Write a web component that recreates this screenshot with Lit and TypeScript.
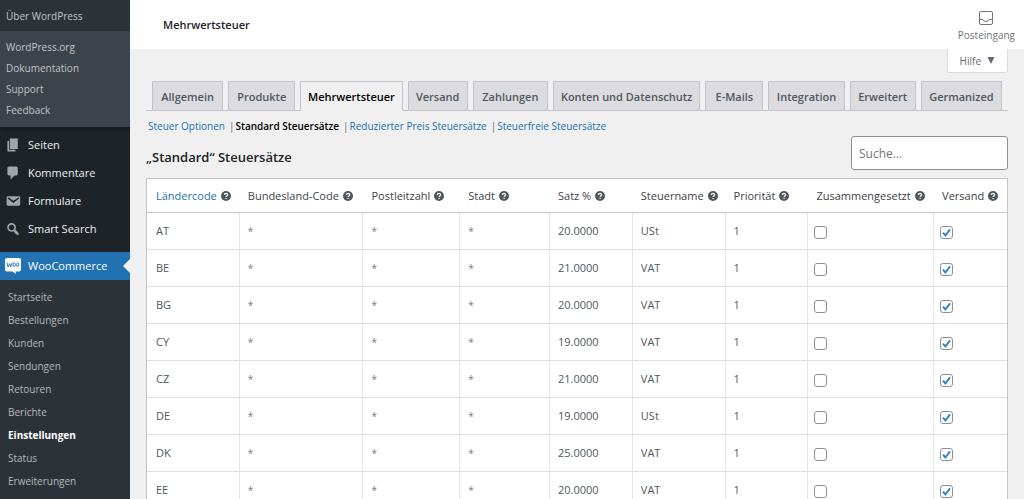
import { LitElement, html, css, svg } from "lit";
import { customElement } from "lit/decorators.js";
import { classMap } from "lit/directives/class-map.js";

const aboutLinks = ["WordPress.org", "Dokumentation", "Support", "Feedback"];

const menu = [
  { label: "Seiten", icon: svg`<path d="M6 15V2h10v13H6zm-1 1h8v2H3V5h2v11z"/>` },
  { label: "Kommentare", icon: svg`<path d="M5 2h9q.82 0 1.41.59T16 4v7q0 .82-.59 1.41T14 13h-2l-5 5v-5H5q-.82 0-1.41-.59T3 11V4q0-.82.59-1.41T5 2z"/>` },
  { label: "Formulare", icon: svg`<path d="M3.87 4h13.25C18.37 4 19 4.59 19 5.79v8.42c0 1.19-.63 1.79-1.88 1.79H3.87c-1.25 0-1.88-.6-1.88-1.79V5.79c0-1.2.63-1.79 1.88-1.79zm6.62 8.6l6.74-5.53c.24-.2.43-.66.13-1.07-.29-.41-.82-.42-1.17-.17l-5.7 3.86L4.8 5.83c-.35-.25-.88-.24-1.17.17-.3.41-.11.87.13 1.07z"/>` },
  { label: "Smart Search", icon: svg`<path d="M12.14 4.18c1.87 1.87 2.11 4.75.72 6.89.12.1.22.21.36.31.2.16.47.36.81.59.34.24.56.39.66.47.42.31.73.57.94.78.32.32.6.65.84 1 .25.35.44.69.59 1.04.14.35.21.68.18 1-.02.32-.14.59-.36.81s-.49.34-.81.36c-.31.02-.65-.04-.99-.19-.35-.14-.7-.34-1.04-.59-.35-.24-.68-.52-1-.84-.21-.21-.47-.52-.77-.93-.1-.13-.25-.35-.47-.66-.22-.32-.4-.57-.56-.78-.16-.2-.29-.35-.44-.5-2.07 1.09-4.69.76-6.44-.98-2.14-2.15-2.14-5.64 0-7.78 2.15-2.15 5.63-2.15 7.78 0zm-1.41 6.36c1.36-1.37 1.36-3.58 0-4.95-1.37-1.37-3.59-1.37-4.95 0-1.37 1.37-1.37 3.58 0 4.95 1.36 1.37 3.58 1.37 4.95 0z"/>` },
];

const shopLinks = ["Startseite", "Bestellungen", "Kunden", "Sendungen", "Retouren", "Berichte", "Einstellungen", "Status", "Erweiterungen"];

const tabs = ["Allgemein", "Produkte", "Mehrwertsteuer", "Versand", "Zahlungen", "Konten und Datenschutz", "E-Mails", "Integration", "Erweitert", "Germanized"];

const sections = ["Steuer Optionen", "Standard Steuersätze", "Reduzierter Preis Steuersätze", "Steuerfreie Steuersätze"];

const columns = ["Ländercode", "Bundesland-Code", "Postleitzahl", "Stadt", "Satz %", "Steuername", "Priorität", "Zusammengesetzt", "Versand"];
// Relative column widths, in the order of the headings.
const columnShares = [92, 124, 97, 90, 83, 93, 83, 126, 74];
const shareTotal = columnShares.reduce((a, b) => a + b, 0);

const rates = [
  ["AT", "20.0000", "USt"],
  ["BE", "21.0000", "VAT"],
  ["BG", "20.0000", "VAT"],
  ["CY", "19.0000", "VAT"],
  ["CZ", "21.0000", "VAT"],
  ["DE", "19.0000", "USt"],
  ["DK", "25.0000", "VAT"],
  ["EE", "20.0000", "VAT"],
];

@customElement("admin-menu")
class AdminMenu extends LitElement {
  static styles = css`
    :host { display: block; flex: 0 0 130px; background: #1d2327; color: #f0f0f1; font-size: 10px; overflow: hidden; }
    a { color: inherit; text-decoration: none; display: block; }
    ul { list-style: none; margin: 0; padding: 0; }
    .about { background: #2c3338; color: #c3c4c7; line-height: 30px; padding: 1px 0 0 6px; }
    .about-list { background: #3c434a; color: #c3c4c7; padding: 6px 6px 6px; margin-bottom: 4px; box-shadow: 0 2px 4px rgba(0, 0, 0, 0.3); }
    .about-list a { line-height: 21px; }
    .item { display: flex; align-items: center; gap: 7px; height: 28px; padding-left: 5px; font-size: 11px; }
    .item svg { width: 16px; height: 16px; fill: #a0a5aa; flex: none; }
    .current { background: #2271b1; color: #fff; margin-top: 9px; position: relative; }
    .current svg { fill: #fff; }
    .current::after { content: ""; position: absolute; right: 0; top: 7px; border: 7px solid transparent; border-right-color: #f0f0f0; border-left-width: 0; }
    .sub { background: #2c3338; color: #b4b9be; padding: 6px 0 200px 8px; }
    .sub a { line-height: 23px; }
    .sub .on { color: #fff; font-weight: 700; }
  `;

  render() {
    return html`
      <nav aria-label="Hauptmenü">
        <a class="about" href="#">Über WordPress</a>
        <ul class="about-list">
          ${aboutLinks.map((t) => html`<li><a href="#">${t}</a></li>`)}
        </ul>
        ${menu.map((m) => html`<a class="item" href="#"><svg viewBox="0 0 20 20" aria-hidden="true">${m.icon}</svg>${m.label}</a>`)}
        <a class="item current" href="#">
          <svg viewBox="0 0 16 16" aria-hidden="true">
            <path d="M2 0h12q2 0 2 2v9.500q0 2-2 2h-3.500l.5 2.500-3.500-2.500H2q-2 0-2-2V2Q0 0 2 0z" />
            <path d="M2 4.500l1 4.500 1.700-3.500 1 3.500 1.500-4.500" fill="none" stroke="#2271b1" stroke-width="0.900" />
            <ellipse cx="9.200" cy="6.700" rx="1.100" ry="1.900" fill="none" stroke="#2271b1" stroke-width="0.900" />
            <ellipse cx="12.700" cy="6.700" rx="1.100" ry="1.900" fill="none" stroke="#2271b1" stroke-width="0.900" />
          </svg>WooCommerce</a>
        <ul class="sub">
          ${shopLinks.map((t) => html`<li><a class=${classMap({ on: t === "Einstellungen" })} href="#">${t}</a></li>`)}
        </ul>
      </nav>
    `;
  }
}

@customElement("tax-table")
class TaxTable extends LitElement {
  static styles = css`
    :host { display: block; }
    table { width: 100%; table-layout: fixed; border-collapse: separate; border-spacing: 0; background: #fff; border: 1px solid #c3c4c7; box-sizing: border-box; }
    th { height: 33px; padding: 0 0 0 9px; text-align: left; font-weight: 400; white-space: nowrap; color: #3c434a; border-bottom: 1px solid #c3c4c7; }
    th:first-child { color: #2271b1; }
    .head { display: flex; align-items: center; gap: 4px; }
    .head svg { width: 10px; height: 10px; flex: none; margin-top: 1px; }
    td { height: 36px; padding: 0; border-bottom: 1px solid #dfdfdf; border-left: 1px solid #e5e5e5; }
    td:first-child { border-left: 0; }
    .text { display: block; box-sizing: border-box; width: 100%; height: 36px; margin: 0; padding: 0 8px 1px; border: 0; background: none; font: inherit; color: #50575e; outline-offset: -2px; }
    td:first-child .text { padding-left: 9px; }
    .any { font-size: 10px; color: #787c82; }
    .check { appearance: none; display: block; box-sizing: border-box; width: 13px; height: 13px; margin: 3px 0 0 6px; border: 1px solid #8c8f94; border-radius: 3px; background: #fff; }
    .check:checked { background: #fff url('data:image/svg+xml;utf8,<svg xmlns="http://www.w3.org/2000/svg" viewBox="0 0 11 11"><path d="M2 5.6l2.4 2.9L9 2.4" fill="none" stroke="%233582c4" stroke-width="2"/></svg>') center / 11px 11px no-repeat; }
  `;

  private textCell(column: number, value: string) {
    return html`<td><input class=${classMap({ text: true, any: value === "*" })} type="text" aria-label=${columns[column]} .value=${value} /></td>`;
  }

  render() {
    return html`
      <table>
        <colgroup>
          ${columnShares.map((w) => html`<col style="width:${(w / shareTotal) * 100}%" />`)}
        </colgroup>
        <thead>
          <tr>
            ${columns.map((c) => html`<th scope="col"><span class="head">${c}
              <svg viewBox="0 0 10 10" aria-hidden="true">
                <circle cx="5" cy="5" r="5" fill="#50575e" />
                <path d="M3.4 3.9Q3.5 2.4 5 2.4T6.6 3.8Q6.6 4.5 5.7 5 5.1 5.3 5.1 6.1M5.1 6.9v1.2" fill="none" stroke="#fff" stroke-width="1.3" />
              </svg></span></th>`)}
          </tr>
        </thead>
        <tbody>
          ${rates.map(([country, rate, name]) => html`
            <tr>
              ${[country, "*", "*", "*", rate, name, "1"].map((v, i) => this.textCell(i, v))}
              <td><input class="check" type="checkbox" aria-label=${columns[7]} /></td>
              <td><input class="check" type="checkbox" aria-label=${columns[8]} checked /></td>
            </tr>`)}
        </tbody>
      </table>
    `;
  }
}

@customElement("app-root")
class AppRoot extends LitElement {
  static styles = css`
    :host { display: flex; height: 100vh; overflow: hidden; background: #f0f0f0; color: #3c434a; font: 11px/16px "Open Sans", "Noto Sans", sans-serif; }
    a { color: #2271b1; text-decoration: none; }
    .main { flex: 1; min-width: 0; }
    .top { display: flex; justify-content: space-between; align-items: center; height: 49px; padding: 0 9px 0 33px; background: #fff; }
    .top h1 { margin: 0; font-size: 11px; font-weight: 600; color: #1d2327; }
    .inbox { display: flex; flex-direction: column; align-items: center; gap: 2px; padding: 5px 0 0; border: 0; background: none; font: inherit; font-size: 10px; color: #757575; }
    .inbox svg { width: 14px; height: 14px; }
    .content { padding: 0 16px; }
    .help-row { display: flex; justify-content: flex-end; }
    .help { display: flex; align-items: center; gap: 6px; height: 24px; padding: 0 12px; border: 1px solid #dcdcde; border-top: 0; border-radius: 0 0 3px 3px; background: #fff; font: inherit; font-size: 10px; color: #646970; }
    .help svg { width: 8px; height: 7px; }
    .tabs { display: grid; grid-template-columns: 71fr 67fr 102fr 60fr 75fr 147fr 58fr 76fr 66fr 81fr; gap: 5px; margin-top: 8px; padding: 0 6px; border-bottom: 1px solid #c3c4c7; }
    .tab { height: 28px; border: 1px solid #c3c4c7; border-bottom: 0; background: #dcdcde; color: #50575e; font-size: 11px; font-weight: 600; line-height: 29px; text-align: center; white-space: nowrap; }
    .tab.active { background: #f0f0f0; color: #000; margin-bottom: -1px; height: 29px; }
    .sections { display: flex; gap: 4px; list-style: none; margin: 7px 0 0; padding: 0 2px; font-size: 10px; }
    .sections li + li::before { content: "|"; color: #646970; padding-right: 1px; }
    .sections .on { color: #000; font-weight: 600; }
    .bar { display: flex; justify-content: space-between; align-items: center; margin-top: 2px; padding-bottom: 8px; }
    .bar h2 { margin: 8px 0 0; font-size: 13px; font-weight: 600; color: #1d2327; }
    .search { box-sizing: border-box; width: 157px; height: 34px; border: 1px solid #8c8f94; border-radius: 3px; padding: 0 7px; font: inherit; font-size: 12px; background: #fff; }
    .search::placeholder { color: #757575; opacity: 1; }
  `;

  render() {
    return html`
      <admin-menu></admin-menu>
      <div class="main">
        <header class="top">
          <h1>Mehrwertsteuer</h1>
          <button class="inbox" type="button">
            <svg viewBox="0 0 14 14" fill="none" stroke="#757575" aria-hidden="true">
              <rect x="0.5" y="0.5" width="13" height="13" rx="1.5" />
              <path d="M0.5 8.5h3.3q.8 2 3.2 2t3.200-2h3.3" />
            </svg>
            Posteingang
          </button>
        </header>
        <div class="content">
          <div class="help-row">
            <button class="help" type="button">Hilfe
              <svg viewBox="0 0 8 7" aria-hidden="true"><path d="M0.5 0h7L4 7z" fill="#646970" /></svg>
            </button>
          </div>
          <nav class="tabs" aria-label="Einstellungen">
            ${tabs.map((t) => html`<a class=${classMap({ tab: true, active: t === "Mehrwertsteuer" })} href="#">${t}</a>`)}
          </nav>
          <ul class="sections">
            ${sections.map((s, i) => html`<li><a class=${classMap({ on: i === 1 })} href="#">${s}</a></li>`)}
          </ul>
          <div class="bar">
            <h2>„Standard“ Steuersätze</h2>
            <input class="search" type="search" aria-label="Suche" placeholder="Suche…" />
          </div>
          <tax-table></tax-table>
        </div>
      </div>
    `;
  }
}
